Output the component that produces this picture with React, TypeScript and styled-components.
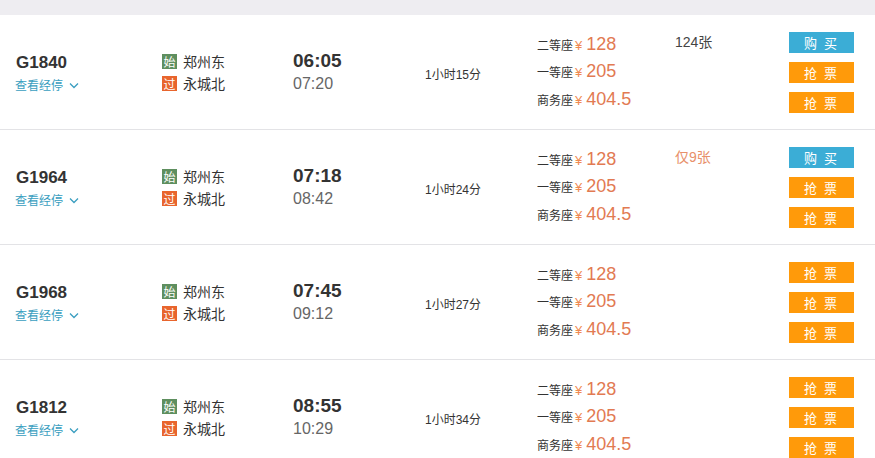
import React from "react";
import styled, { createGlobalStyle } from "styled-components";

const GlobalStyle = createGlobalStyle`
  html, body {
    margin: 0;
    padding: 0;
    overflow: hidden;
    background: #ffffff;
  }
  body {
    font-family: "Liberation Sans", "Noto Sans CJK SC", sans-serif;
    color: #333;
  }
`;

const Page = styled.div`
  width: 875px;
  background: #fff;
`;

const TopStrip = styled.div`
  height: 15px;
  background: #eeedf1;
`;

const Row = styled.div`
  display: grid;
  grid-template-columns: 147px 131px 132px 112px 138px 114px 65px;
  height: 114px;
  padding-left: 15px;
  border-bottom: 1px solid #e3e3e6;
  align-items: center;
`;

const TrainCol = styled.div`
  display: flex;
  flex-direction: column;
  padding-top: 3px;
`;

const TrainNo = styled.div`
  font-family: "Liberation Sans", Arial, sans-serif;
  font-weight: bold;
  font-size: 17px;
  line-height: 20px;
  color: #333;
  padding-left: 1px;
`;

const StopsLink = styled.div`
  display: flex;
  align-items: center;
  gap: 6px;
  margin-top: 3px;
  font-family: "Noto Sans CJK SC", sans-serif;
  font-size: 12px;
  line-height: 18px;
  color: #3a9ec0;
`;

const StationCol = styled.div`
  display: flex;
  flex-direction: column;
  gap: 7px;
`;

const StationLine = styled.div`
  display: flex;
  align-items: center;
  gap: 6px;
  height: 15px;
  font-family: "Noto Sans CJK SC", sans-serif;
  font-size: 14px;
  color: #333;
`;

const Badge = styled.span<{ $tone: "start" | "pass" }>`
  display: inline-flex;
  align-items: center;
  justify-content: center;
  width: 15px;
  height: 15px;
  background: ${(p) => (p.$tone === "start" ? "#5e8f5f" : "#e8652d")};
  color: #fff;
  font-size: 12px;
  line-height: 15px;
`;

const TimeCol = styled.div`
  display: flex;
  flex-direction: column;
  gap: 2px;
`;

const DepTime = styled.div`
  font-family: "Liberation Sans", Arial, sans-serif;
  font-weight: bold;
  font-size: 19px;
  line-height: 22px;
  color: #333;
`;

const ArrTime = styled.div`
  font-family: "Liberation Sans", Arial, sans-serif;
  font-size: 16px;
  line-height: 20px;
  color: #666;
`;

const Duration = styled.div`
  font-family: "Liberation Sans", "Noto Sans CJK SC", sans-serif;
  font-size: 12px;
  color: #333;
  padding-top: 2px;
`;

const SeatCol = styled.div`
  display: flex;
  flex-direction: column;
`;

const SeatLine = styled.div`
  display: flex;
  align-items: baseline;
  height: 27.5px;
  line-height: 27.5px;
`;

const SeatLabel = styled.span`
  font-family: "Noto Sans CJK SC", sans-serif;
  font-size: 12px;
  color: #333;
`;

const Yen = styled.span`
  font-family: "Liberation Sans", Arial, sans-serif;
  font-size: 13px;
  color: #ef8a52;
  margin: 0 4px 0 2px;
`;

const Price = styled.span`
  font-family: "Liberation Sans", Arial, sans-serif;
  font-size: 18px;
  color: #e27a52;
`;

const Remain = styled.div<{ $low?: boolean }>`
  align-self: start;
  margin-top: 15px;
  font-family: "Liberation Sans", "Noto Sans CJK SC", sans-serif;
  font-size: 14px;
  line-height: 24px;
  color: ${(p) => (p.$low ? "#e8906a" : "#444")};
`;

const ButtonCol = styled.div`
  display: flex;
  flex-direction: column;
  gap: 9px;
`;

const Btn = styled.div<{ $kind: "buy" | "grab" }>`
  height: 21px;
  display: flex;
  align-items: center;
  justify-content: center;
  background: ${(p) => (p.$kind === "buy" ? "#3badd6" : "#ff9a0a")};
  color: #fff;
  font-family: "Noto Sans CJK SC", sans-serif;
  font-size: 13px;
  letter-spacing: 2px;
  white-space: pre;
`;

const Chevron = () => (
  <svg width="10" height="7" viewBox="0 0 10 7">
    <path d="M1 1.5 L5 5.5 L9 1.5" fill="none" stroke="#3a9ec0" strokeWidth="1.3" />
  </svg>
);

type Train = {
  no: string;
  dep: string;
  arr: string;
  dur: string;
  remain?: string;
  low?: boolean;
  buy: boolean;
};

const trains: Train[] = [
  { no: "G1840", dep: "06:05", arr: "07:20", dur: "1小时15分", remain: "124张", buy: true },
  { no: "G1964", dep: "07:18", arr: "08:42", dur: "1小时24分", remain: "仅9张", low: true, buy: true },
  { no: "G1968", dep: "07:45", arr: "09:12", dur: "1小时27分", buy: false },
  { no: "G1812", dep: "08:55", arr: "10:29", dur: "1小时34分", buy: false },
];

const seats = [
  { label: "二等座", price: "128" },
  { label: "一等座", price: "205" },
  { label: "商务座", price: "404.5" },
];

export default function App() {
  return (
    <Page>
      <GlobalStyle />
      <TopStrip />
      {trains.map((t) => (
        <Row key={t.no}>
          <TrainCol>
            <TrainNo>{t.no}</TrainNo>
            <StopsLink>
              查看经停
              <Chevron />
            </StopsLink>
          </TrainCol>
          <StationCol>
            <StationLine>
              <Badge $tone="start">始</Badge>郑州东
            </StationLine>
            <StationLine>
              <Badge $tone="pass">过</Badge>永城北
            </StationLine>
          </StationCol>
          <TimeCol>
            <DepTime>{t.dep}</DepTime>
            <ArrTime>{t.arr}</ArrTime>
          </TimeCol>
          <Duration>{t.dur}</Duration>
          <SeatCol>
            {seats.map((s) => (
              <SeatLine key={s.label}>
                <SeatLabel>{s.label}</SeatLabel>
                <Yen>¥</Yen>
                <Price>{s.price}</Price>
              </SeatLine>
            ))}
          </SeatCol>
          {t.remain ? <Remain $low={t.low}>{t.remain}</Remain> : <div />}
          <ButtonCol>
            <Btn $kind={t.buy ? "buy" : "grab"}>{t.buy ? "购 买" : "抢 票"}</Btn>
            <Btn $kind="grab">抢 票</Btn>
            <Btn $kind="grab">抢 票</Btn>
          </ButtonCol>
        </Row>
      ))}
    </Page>
  );
}
